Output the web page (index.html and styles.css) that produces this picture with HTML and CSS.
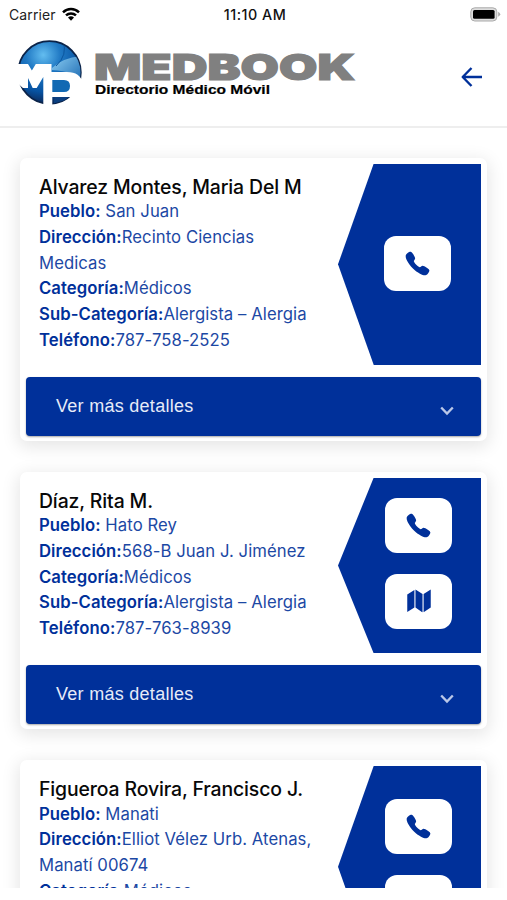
FILE: index.html
```html
<!DOCTYPE html>
<html lang="es">
<head>
<meta charset="utf-8">
<title>Medbook</title>
<link rel="stylesheet" href="styles.css">
</head>
<body>
<svg class="defs" aria-hidden="true">
  <symbol id="phone" viewBox="0 0 512 512"><path d="M391 480c-19.500 0-46.900-7.100-87.900-30-49.900-28-88.500-53.800-138.200-103.300C117 298.800 93.700 267.800 61 208.400c-36.900-67.100-30.600-102.300-23.500-117.300 8.400-18.100 20.900-29 37-39.700a176 176 0 0 1 28.700-15.200c1-.4 1.900-.8 2.800-1.200 4.900-2.200 12.500-5.600 22-2 6.400 2.400 12.100 7.300 21 16 18.200 18 43.100 58.100 52.300 77.700 6.200 13.200 10.200 22 10.200 31.800 0 11.500-5.800 20.300-12.800 29.900-1.300 1.800-2.600 3.500-3.900 5.200-7.600 10-9.300 12.900-8.200 18.100 2.200 10.300 18.800 41.100 46.100 68.300s57.200 42.700 67.500 44.900c5.400 1.100 8.300-.6 18.700-8.500l4.700-3.600c10.700-7.900 19.100-13.500 30.300-13.500h.1c9.800 0 18.200 4.300 32 11.200 18 9.100 59.300 33.700 77.500 51.900 8.700 8.800 13.700 14.600 16 20.900 3.600 9.500.2 17.100-2 22l-1.300 2.900c-2.900 7.100-8.500 17.600-15.200 28.600-10.700 16.100-21.700 28.600-39.800 37C411.700 478.200 401.600 480 391 480z"/></symbol>
  <symbol id="map" viewBox="0 0 24 24"><path d="M0 5.500 7.300 1v18L0 23.500zM8.400.5 15.600 5v19L8.400 19zM16.700 5 24 .5v18.500l-7.300 4.700z"/></symbol>
  <symbol id="chevron" viewBox="0 0 14 10"><path d="M1.200 1.500 7 7.500l5.800-6" fill="none" stroke="currentColor" stroke-width="2.400"/></symbol>
</svg>
<div class="status">
  <div class="carrier">Carrier
    <svg width="18" height="14" viewBox="0 0 18 14"><g fill="none" stroke="#000" stroke-width="2.500"><path d="M1 5.300a11.600 11.600 0 0 1 16 0"/><path d="M4 8.400a7.400 7.400 0 0 1 10 0"/></g><path d="m9 13.800-3-3.200a4.500 4.500 0 0 1 6 0z"/></svg>
  </div>
  <div class="time">11:10 AM</div>
  <svg class="battery" width="31" height="15" viewBox="0 0 31 15"><rect x=".8" y=".8" width="26" height="13.200" rx="4" fill="#ddd" stroke="#aaa"/><rect x="3" y="3" width="21.600" height="8.800" rx="1.500"/><path d="M28.200 4.800q4 2.400 0 5z" fill="#aaa"/></svg>
</div>
<header class="header">
  <svg class="logo" width="70" height="72" viewBox="0 0 70 72">
    <defs>
      <radialGradient id="globe" cx="40%" cy="22%" r="78%"><stop offset="0" stop-color="#63bdf0"/><stop offset=".35" stop-color="#2079c4"/><stop offset=".75" stop-color="#0753a2"/><stop offset="1" stop-color="#0b2858"/></radialGradient>
      <linearGradient id="shine" x1="0" y1="0" x2="1" y2="1"><stop offset="0" stop-color="#8bcdf2"/><stop offset="1" stop-color="#1362ad"/></linearGradient>
      <clipPath id="disc"><circle cx="33.500" cy="36.500" r="31"/></clipPath>
    </defs>
    <circle cx="33.500" cy="36.500" r="31.300" fill="url(#globe)" stroke="#0b2348" stroke-width="1.800"/>
    <g clip-path="url(#disc)"><path d="M36 32q10-10 30-12v30q-4-15-30-16z" fill="url(#shine)"/><path d="M47 5q5 14-7 25" fill="none" stroke="#0b559d"/></g>
    <path d="M0 28h12l3.900 6.500 3.900-6.500h15.700v8H51c9 0 14 4 15.500 10v12L55 61H36.300v9h-9V41l-6.600 11h-4L12 42v10H7L0 46z" fill="#fff"/>
    <path d="M36.300 44H48q6 0 6 6t-6 6H36.300z" fill="#1169b3"/>
    <path d="M38.500 61H53l-5 3.500-10.500 3z" fill="#0b3f80"/>
  </svg>
  <div class="wordmark">
    <svg class="brand" width="264" height="34" viewBox="0 0 264 34"><text x="0" y="28.500" textLength="261" lengthAdjust="spacingAndGlyphs">MEDBOOK</text></svg>
    <svg class="tagline" width="180" height="15" viewBox="0 0 180 15"><text x="1" y="11" textLength="175" lengthAdjust="spacingAndGlyphs">Directorio Médico Móvil</text></svg>
  </div>
  <svg class="back" width="22" height="20" viewBox="0 0 22 20"><path d="M21 10H2M10.500 1 1.700 10l8.800 9" fill="none" stroke="#00309a" stroke-width="2.400" stroke-linejoin="round"/></svg>
</header>
<main class="list">
  <article class="card">
    <div class="top">
      <div class="info">
        <h2>Alvarez Montes, Maria Del M</h2>
        <p><b>Pueblo:</b> San Juan</p>
        <p><b>Dirección:</b>Recinto Ciencias<br>Medicas</p>
        <p><b>Categoría:</b>Médicos</p>
        <p><b>Sub-Categoría:</b>Alergista – Alergia</p>
        <p><b>Teléfono:</b>787-758-2525</p>
      </div>
      <div class="panel single"><a class="action"><svg><use href="#phone"/></svg></a></div>
    </div>
    <div class="details"><span>Ver más detalles</span><svg><use href="#chevron"/></svg></div>
  </article>
  <article class="card">
    <div class="top">
      <div class="info">
        <h2>Díaz, Rita M.</h2>
        <p><b>Pueblo:</b> Hato Rey</p>
        <p><b>Dirección:</b>568-B Juan J. Jiménez</p>
        <p><b>Categoría:</b>Médicos</p>
        <p><b>Sub-Categoría:</b>Alergista – Alergia</p>
        <p><b>Teléfono:</b>787-763-8939</p>
      </div>
      <div class="panel"><a class="action"><svg><use href="#phone"/></svg></a><a class="action"><svg class="map"><use href="#map"/></svg></a></div>
    </div>
    <div class="details"><span>Ver más detalles</span><svg><use href="#chevron"/></svg></div>
  </article>
  <article class="card">
    <div class="top">
      <div class="info">
        <h2>Figueroa Rovira, Francisco J.</h2>
        <p><b>Pueblo:</b> Manati</p>
        <p><b>Dirección:</b>Elliot Vélez Urb. Atenas,<br>Manatí 00674</p>
        <p><b>Categoría:</b>Médicos</p>
      </div>
      <div class="panel tall"><a class="action"><svg><use href="#phone"/></svg></a><a class="action"><svg class="map"><use href="#map"/></svg></a></div>
    </div>
  </article>
</main>
</body>
</html>
```
FILE: styles.css
```css
* { box-sizing: border-box; }
body { margin: 0; height: 900px; overflow: hidden; background: #fff; font-family: Inter, "Liberation Sans", sans-serif; }
.defs { position: absolute; width: 0; height: 0; }
.status { height: 28px; display: grid; grid-template-columns: 1fr auto 1fr; align-items: center; padding: 0 6px 0 9px; font-size: 14px; color: #222; }
.carrier { display: flex; align-items: center; gap: 6px; letter-spacing: .1px; }
.time { font-weight: 500; font-size: 14.3px; letter-spacing: .5px; color: #111; }
.battery { justify-self: end; }
.header { height: 100px; display: flex; align-items: flex-start; padding: 8px 24px 0 16px; border-bottom: 2px solid #eee; }
.logo { flex: none; display: block; }
.brand, .tagline { display: block; }
.wordmark { margin: 15px 0 0 8px; }
.back { margin: 31px 0 0 auto; }
.brand text { font: 900 36px Inter, sans-serif; fill: #808080; stroke: #808080; stroke-width: 1.200px; }
.tagline { margin-top: -2px; }
.tagline text { font: bold 12.500px "Liberation Sans", sans-serif; fill: #000; stroke: #000; stroke-width: .2px; }
.list { height: 760px; overflow: hidden; padding: 29.500px 20px 0; display: flex; flex-direction: column; gap: 30.400px; }
.card { flex: none; padding: 6px 6px 5px; border-radius: 7px; background: #fff; box-shadow: 0 4px 17px 2px rgba(0, 0, 0, .1); }
.top { display: flex; justify-content: space-between; }
.info { padding: 11.500px 0 11.600px 13px; white-space: nowrap; width: 312px; color: #1c48a4; font-size: 16.700px; line-height: 25.700px; letter-spacing: .07px; }
.info h2 { margin: 0; color: #080808; font-size: 19.400px; font-weight: 550; line-height: 24px; letter-spacing: -.12px; }
.info p { margin: 0; }
.info p:first-of-type { margin-top: .3px; }
.info b { font-weight: 600; color: #00309a; }
.panel { flex: none; width: 143px; display: flex; flex-direction: column; align-items: center; justify-content: center; gap: 20.500px; padding: 0 0 4px 18px; background: #00309a; clip-path: polygon(25% 0, 100% 0, 100% 100%, 25% 100%, 0 50%); }
.panel.single { padding: 0 0 1px 16px; }
.panel.tall { height: 202px; padding-bottom: 5px; }
.action { width: 67px; height: 55px; border-radius: 12px; background: #fff; display: grid; place-items: center; }
.action svg { width: 27px; height: 27px; fill: #00309a; }
.action svg.map { width: 24px; height: 23.500px; }
.details { margin-top: 12px; height: 59px; padding: 0 27px 0 30px; border-radius: 4px; background: #00309a; color: #e6ebf8; display: flex; align-items: center; justify-content: space-between; font: 18px "Liberation Sans", sans-serif; letter-spacing: .28px; box-shadow: 0 1px 2px rgba(0, 0, 0, .35); }
.details svg { width: 14px; height: 10px; margin-top: 8px; color: #b9c7e8; }
```
